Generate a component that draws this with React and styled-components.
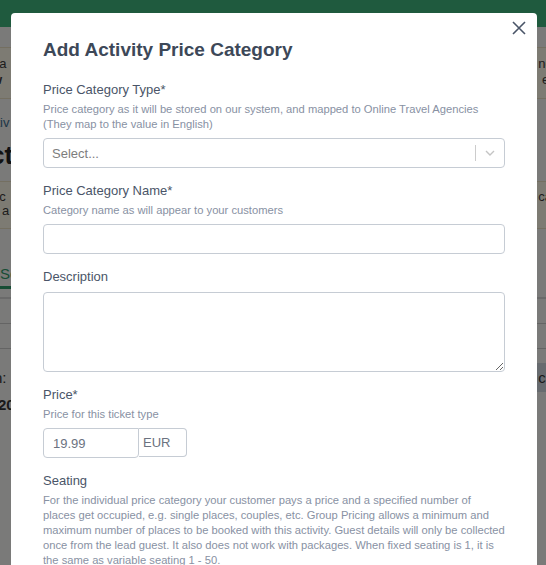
import React from 'react'
import styled, { createGlobalStyle } from 'styled-components'

const GlobalStyle = createGlobalStyle`
    html, body {
        margin: 0;
        padding: 0;
        height: 100%;
        overflow: hidden;
    }
    body {
        font-family: "Liberation Sans", Arial, sans-serif;
        background: #ffffff;
    }
`

const Page = styled.div`
    position: relative;
    width: 546px;
    height: 565px;
    overflow: hidden;
    background: #f4f4f2;
`

const Header = styled.div`
    height: 27px;
    background: #3fb47d;
`

const Notice = styled.div`
    margin-top: ${p => p.$top || 0}px;
    padding: 8px 0 10px;
    background: #fbf6e6;
    border-top: 1px solid #e8dfc2;
    border-bottom: 1px solid #e8dfc2;
    font-size: 13px;
    line-height: ${p => p.$lh || 16}px;
    color: #3a3a3a;
    display: flex;
    justify-content: space-between;
`

const NoticeCol = styled.div`
    display: flex;
    flex-direction: column;
    align-items: ${p => (p.$end ? 'flex-end' : 'flex-start')};
    margin-left: ${p => (p.$end ? '0' : '-8px')};
    margin-right: ${p => (p.$end ? '-6px' : '0')};
`

const Crumb = styled.div`
    margin-top: 16px;
    margin-left: -10px;
    font-size: 13px;
    color: #3c6d8f;
`

const BigTitle = styled.div`
    margin-top: 10px;
    margin-left: -10px;
    font-size: 26px;
    font-weight: bold;
    color: #222;
`

const Tabs = styled.div`
    margin-top: 36px;
    padding-bottom: 8px;
    border-bottom: 2px solid #d5d5d5;
    font-size: 15px;
`

const Tab = styled.span`
    display: inline-block;
    color: #2f9a6a;
    padding-bottom: 4px;
    border-bottom: 3px solid #2f9a6a;
`

const Row = styled.div`
    height: 24px;
    border-bottom: 1px solid #c9c9c9;
`

const DataRow = styled.div`
    margin-top: ${p => p.$top}px;
    display: flex;
    justify-content: space-between;
    align-items: center;
    font-size: 15px;
    color: #333;
`

const Cell = styled.span`
    margin-left: ${p => p.$shift}px;
    font-weight: ${p => (p.$bold ? 'bold' : 'normal')};
`

const DarkCell = styled.span`
    background: #cfd6df;
    padding: 6px 0 6px 4px;
    margin-right: -8px;
`

const Overlay = styled.div`
    position: absolute;
    inset: 0;
    background: rgba(0, 0, 0, 0.5);
`

const Modal = styled.div`
    position: absolute;
    top: 13px;
    left: 11px;
    width: 526px;
    height: 700px;
    box-sizing: border-box;
    background: #fff;
    border-radius: 4px;
    padding: 25px 32px;
`

const Close = styled.button`
    position: absolute;
    top: 6px;
    right: 9px;
    width: 18px;
    height: 18px;
    padding: 0;
    border: 0;
    background: none;
    color: #4a5568;
    display: flex;
    align-items: center;
    justify-content: center;
`

const Title = styled.h2`
    margin: 0 0 18px;
    font-size: 19px;
    line-height: 24px;
    font-weight: bold;
    color: #3d4858;
`

const Field = styled.div`
    margin-bottom: 13px;
`

const Label = styled.div`
    font-size: 13px;
    line-height: 20px;
    color: #4a5568;
`

const Help = styled.div`
    margin-top: 2px;
    font-size: 11.2px;
    line-height: 15px;
    color: #8891a3;
`

const Control = styled.div`
    margin-top: 6px;
`

const SelectBox = styled.div`
    height: 30px;
    box-sizing: border-box;
    border: 1px solid #c6ccd4;
    border-radius: 4px;
    display: flex;
    align-items: center;
    padding-left: 8px;
    font-size: 13px;
    color: #7d7d7d;
`

const Placeholder = styled.span`
    flex: 1;
`

const Separator = styled.span`
    width: 1px;
    height: 16px;
    background: #cccccc;
`

const Chevron = styled.span`
    width: 28px;
    display: flex;
    align-items: center;
    justify-content: center;
    color: #c4c4c4;
`

const TextInput = styled.input`
    display: block;
    width: 100%;
    height: 30px;
    box-sizing: border-box;
    border: 1px solid #c6ccd4;
    border-radius: 4px;
    outline: none;
    padding: 0 8px;
    font-family: inherit;
    font-size: 13px;
    color: #6b7280;
`

const TextArea = styled.textarea`
    display: block;
    width: 100%;
    height: 80px;
    box-sizing: border-box;
    border: 1px solid #c6ccd4;
    border-radius: 4px;
    outline: none;
    font-family: inherit;
    resize: vertical;
    margin-top: 5px;
`

const Group = styled.div`
    display: flex;
    align-items: flex-start;
`

const PriceInput = styled.div`
    width: 96px;
    height: 30px;
    box-sizing: border-box;
    border: 1px solid #c6ccd4;
    border-radius: 4px 0 4px 4px;
    display: flex;
    align-items: center;
    padding-left: 9px;
    font-size: 13px;
    color: #6b7280;
`

const Addon = styled.div`
    width: 48px;
    height: 29px;
    box-sizing: border-box;
    border: 1px solid #c6ccd4;
    border-left: 0;
    border-radius: 0 4px 4px 0;
    display: flex;
    align-items: center;
    padding-left: 4px;
    font-size: 13px;
    color: #6b7280;
`

const Paragraph = styled.p`
    margin: 2px 0 0;
    font-size: 11.2px;
    line-height: 15px;
    color: #8891a3;
`

export default function App() {
    return <>
        <GlobalStyle />
        <Page>
            <Header />
            <Notice $top={20}>
                <NoticeCol><span>ha</span><b>w</b></NoticeCol>
                <NoticeCol $end><span>nc</span><span>el</span></NoticeCol>
            </Notice>
            <Crumb>ctiv</Crumb>
            <BigTitle>ctiv</BigTitle>
            <Notice $top={10} $lh={14}>
                <NoticeCol><span>ac</span><span>s a</span></NoticeCol>
                <NoticeCol $end><span>ca</span><span>&nbsp;</span></NoticeCol>
            </Notice>
            <Tabs><Tab>Sc</Tab></Tabs>
            <Row />
            <Row />
            <DataRow $top={14}>
                <Cell $shift={-6}>n:</Cell>
                <DarkCell>ca</DarkCell>
            </DataRow>
            <DataRow $top={4}>
                <Cell $shift={-2} $bold>20</Cell>
            </DataRow>
            <Overlay />
            <Modal>
                <Close aria-label="Close">
                    <svg width="14" height="14" viewBox="0 0 14 14">
                        <path d="M1 1L13 13M13 1L1 13" stroke="currentColor" strokeWidth="1.6" fill="none" />
                    </svg>
                </Close>
                <Title>Add Activity Price Category</Title>

                <Field>
                    <Label>Price Category Type*</Label>
                    <Help>
                        Price category as it will be stored on our system, and mapped to Online Travel Agencies
                        <br />
                        (They map to the value in English)
                    </Help>
                    <Control>
                        <SelectBox>
                            <Placeholder>Select...</Placeholder>
                            <Separator />
                            <Chevron>
                                <svg width="10" height="6" viewBox="0 0 10 6">
                                    <path d="M1 1L5 5L9 1" stroke="currentColor" strokeWidth="1.4" fill="none" />
                                </svg>
                            </Chevron>
                        </SelectBox>
                    </Control>
                </Field>

                <Field>
                    <Label>Price Category Name*</Label>
                    <Help>Category name as will appear to your customers</Help>
                    <Control>
                        <TextInput type="text" />
                    </Control>
                </Field>

                <Field>
                    <Label>Description</Label>
                    <TextArea />
                </Field>

                <Field>
                    <Label>Price*</Label>
                    <Help>Price for this ticket type</Help>
                    <Control>
                        <Group>
                            <PriceInput>19.99</PriceInput>
                            <Addon>EUR</Addon>
                        </Group>
                    </Control>
                </Field>

                <Field>
                    <Label>Seating</Label>
                    <Paragraph>
                        For the individual price category your customer pays a price and a specified number of
                        places get occupied, e.g. single places, couples, etc. Group Pricing allows a minimum and
                        maximum number of places to be booked with this activity. Guest details will only be collected
                        once from the lead guest. It also does not work with packages. When fixed seating is 1, it is
                        the same as variable seating 1 - 50.
                    </Paragraph>
                </Field>
            </Modal>
        </Page>
    </>
}
